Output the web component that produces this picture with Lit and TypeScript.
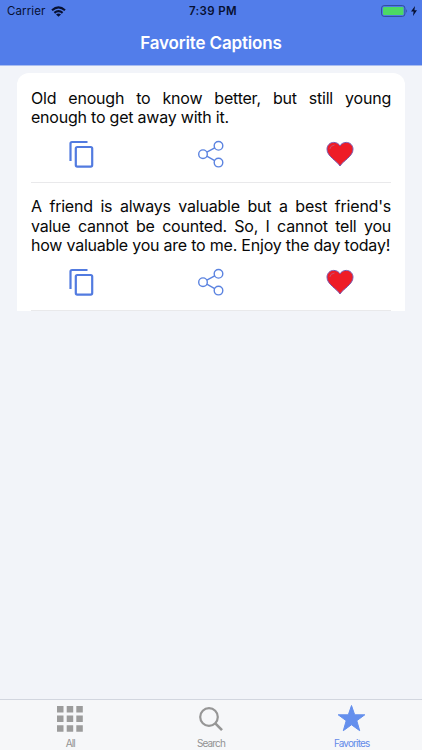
import { LitElement, html, css } from "lit";
import { customElement, property } from "lit/decorators.js";

const copyIcon = html`<svg width="27" height="28" viewBox="0 0 27 28" fill="none" stroke="#527be0" stroke-width="2.200">
  <path d="M19.500 2H4Q2.500 2 2.500 3.500V21" /><rect x="7.800" y="7" width="16.400" height="19.600" rx="1.500" />
</svg>`;

const shareIcon = html`<svg width="27" height="28" viewBox="0 0 27 28" fill="none" stroke="#5b83e0" stroke-width="1.400">
  <circle cx="6" cy="14.200" r="4.300" /><circle cx="21.500" cy="5.800" r="4.300" /><circle cx="21.500" cy="22.600" r="4.300" />
  <path d="M9.800 12.200L17.700 7.800M9.800 16.200L17.700 20.600" />
</svg>`;

const heartIcon = html`<svg width="28" height="28" viewBox="0 0 28 28">
  <path d="M14 26C12.500 23.500 9.500 21.300 6.500 18.500C3 15.300 1 12.500 1 9.200C1 5.200 4 2.400 7.700 2.400C10.500 2.400 13 3.800 14 6C15 3.800 17.500 2.400 20.300 2.400C24 2.400 27 5.200 27 9.200C27 12.500 25 15.300 21.500 18.500C18.500 21.300 15.500 23.500 14 26Z" fill="#ee1c27" stroke="#7659b0" stroke-width="1" />
  <path d="M3.800 9Q4.300 5.500 8.500 5" fill="none" stroke="#c8506e" stroke-width="1" />
</svg>`;

@customElement("caption-item")
export class CaptionItem extends LitElement {
  @property() text = "";

  static styles = css`
    :host { display: block; border-bottom: 1px solid #e9e9eb; }
    .text {
      margin: 0; text-align: justify; font-size: 16px; line-height: 19.400px;
      letter-spacing: -0.220px; color: #080808;
    }
    .actions {
      display: grid; grid-template-columns: repeat(3, 1fr); justify-items: center;
      margin: 0 -14px; padding: 12.200px 0 14px;
    }
    svg { display: block; }
  `;

  render() {
    return html`<p class="text">${this.text}</p>
      <div class="actions">${copyIcon}${shareIcon}${heartIcon}</div>`;
  }
}

@customElement("app-root")
export class AppRoot extends LitElement {
  static styles = css`
    :host {
      display: flex; flex-direction: column; height: 750px; overflow: hidden;
      background: #f2f4f9; font-family: Inter, "Liberation Sans", sans-serif;
    }
    svg { display: block; }
    header { height: 65px; background: #527dea; border-bottom: 1px solid #a9bdf0; flex: none; }
    .status {
      display: grid; grid-template-columns: 1fr auto 1fr; align-items: center;
      height: 22px; padding: 0 5px 0 7px; color: #071032; font-size: 11.500px;
    }
    .carrier { display: flex; align-items: center; gap: 6px; letter-spacing: 0.100px; }
    .time { font-weight: 600; letter-spacing: 0.350px; padding-left: 2px; }
    .power { display: flex; justify-content: flex-end; align-items: center; gap: 3px; }
    h1 {
      margin: 0; height: 43px; line-height: 43px; text-align: center;
      color: #fff; font-size: 17px; font-weight: 600; letter-spacing: -0.160px;
    }
    main { flex: 1; padding: 7px 17px 0; }
    .card { background: #fff; border-radius: 12px 12px 0 0; padding: 16px 14px 0; }
    caption-item + caption-item { margin-top: 14.200px; }
    nav {
      display: grid; grid-template-columns: repeat(3, 1fr); height: 50px; flex: none;
      border-top: 1px solid #d2d6df; background: #f6f7f9;
    }
    .tab {
      display: flex; flex-direction: column; align-items: center; gap: 4px; padding-top: 5px;
      color: #929292; font-size: 10px; line-height: 14px; letter-spacing: -0.850px;
    }
    .active { color: #648be9; }
  `;

  render() {
    return html`
      <header>
        <div class="status">
          <div class="carrier">Carrier
            <svg width="15" height="11" viewBox="0 0 15 11" fill="none" stroke="#071032" stroke-width="2.100">
              <path d="M1 4.200Q7.500 -1.600 14 4.200M3.400 6.900Q7.500 3.300 11.600 6.900" />
              <path d="M5 8.400Q7.500 6.400 10 8.400L7.500 10.800Z" fill="#071032" stroke="none" />
            </svg>
          </div>
          <div class="time">7:39 PM</div>
          <div class="power">
            <svg width="27" height="12" viewBox="0 0 27 12">
              <rect x="0.600" y="0.600" width="23.300" height="10.800" rx="2.500" fill="none" stroke="#304c9b" />
              <rect x="2" y="2" width="20.500" height="8" rx="1" fill="#4cd964" />
              <path d="M25.200 4Q27 6 25.200 8Z" fill="#304c9b" />
            </svg>
            <svg width="6" height="10" viewBox="0 0 6 10"><path d="M4 0L0 5.600H2.600L2 10L6 4.200H3.400Z" fill="#071032" /></svg>
          </div>
        </div>
        <h1>Favorite Captions</h1>
      </header>
      <main>
        <div class="card">
          <caption-item text="Old enough to know better, but still young enough to get away with it."></caption-item>
          <caption-item text="A friend is always valuable but a best friend's value cannot be counted. So, I cannot tell you how valuable you are to me. Enjoy the day today!"></caption-item>
        </div>
      </main>
      <nav>
        <div class="tab">
          <svg width="28" height="27" viewBox="0 0 28 27" fill="#9c9c9c">
            <path d="M1 1h6.500v6.500h-6.500zM10.700 1h6.500v6.500h-6.500zM20.300 1h6.500v6.500h-6.500zM1 10.600h6.500v6.500h-6.500zM10.700 10.600h6.500v6.500h-6.500zM20.300 10.600h6.500v6.500h-6.500zM1 20.200h6.500v6.500h-6.500zM10.700 20.200h6.500v6.500h-6.500zM20.300 20.200h6.500v6.500h-6.500z" />
          </svg>
          <span>All</span>
        </div>
        <div class="tab">
          <svg width="28" height="27" viewBox="0 0 28 27" fill="none" stroke="#969696">
            <circle cx="12" cy="12" r="8.800" stroke-width="2.200" /><path d="M18.300 18.300L25 25.200" stroke-width="2.600" />
          </svg>
          <span>Search</span>
        </div>
        <div class="tab active">
          <svg width="28" height="27" viewBox="0 0 28 27">
            <path d="M13.500 0.500L16.700 9.800H26.800L18.800 15.700L21.700 25.700L13.500 19.800L5.300 25.700L8.200 15.700L0.200 9.800H10.300Z" fill="#648fed" stroke="#648fed" stroke-linejoin="round" />
          </svg>
          <span>Favorites</span>
        </div>
      </nav>
    `;
  }
}
